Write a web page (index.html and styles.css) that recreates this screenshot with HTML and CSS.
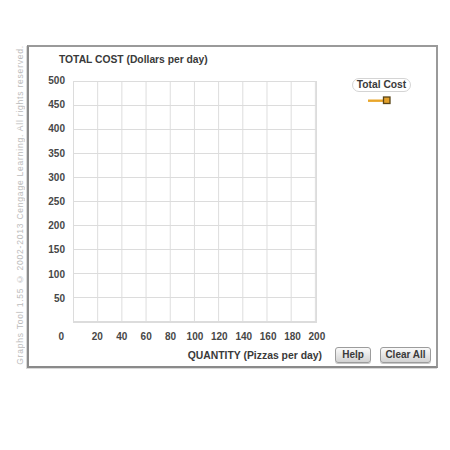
FILE: index.html
```html
<!DOCTYPE html>
<html>
<head>
<meta charset="utf-8">
<link rel="stylesheet" href="styles.css">
</head>
<body>
<div class="stage">
  <div class="copyright"><span>Graphs Tool 1.55 © 2002-2013 Cengage Learning. All rights reserved.</span></div>
  <div class="panel">
    <div class="title">TOTAL COST (Dollars per day)</div>
    <div class="chart-row">
      <div class="ylabels">
        <span>500</span><span>450</span><span>400</span><span>350</span><span>300</span>
        <span>250</span><span>200</span><span>150</span><span>100</span><span>50</span>
      </div>
      <div class="plot"></div>
      <div class="side">
        <div class="legend">Total Cost</div>
        <svg class="marker" width="24" height="9" viewBox="0 0 24 9">
          <rect x="0" y="3.5" width="16" height="2.4" fill="#e9a62a"/>
          <rect x="15.5" y="1" width="6.5" height="6.5" fill="#e3a12c" stroke="#5a4518" stroke-width="1.3"/>
        </svg>
      </div>
    </div>
    <div class="xlabels-row">
      <div class="origin">0</div>
      <div class="xlabels">
        <span>20</span><span>40</span><span>60</span><span>80</span><span>100</span>
        <span>120</span><span>140</span><span>160</span><span>180</span><span>200</span>
      </div>
    </div>
    <div class="bottom-row">
      <div class="xtitle">QUANTITY (Pizzas per day)</div>
      <div class="btn help">Help</div>
      <div class="btn clear">Clear All</div>
    </div>
  </div>
</div>
</body>
</html>
```
FILE: styles.css
```css
html, body {
  margin: 0;
  padding: 0;
  background: #ffffff;
}
body {
  font-family: "Liberation Sans", Arial, sans-serif;
  width: 450px;
  height: 450px;
}
.stage {
  display: flex;
  padding: 45px 0 0 12px;
}
.copyright {
  width: 15px;
  height: 323px;
  display: flex;
  justify-content: center;
  align-items: flex-start;
}
.copyright span {
  writing-mode: vertical-rl;
  transform: rotate(180deg);
  font-size: 8.5px;
  color: #bcbcbc;
  white-space: nowrap;
  letter-spacing: 0.79px;
}
.panel {
  width: 407px;
  height: 319px;
  border: 2px solid #8a8a8a;
  border-top-color: #9a9a9a;
  border-right-color: #9a9a9a;
  box-shadow: -1px 1px 0 #d8d8d8;
  display: flex;
  flex-direction: column;
}
.title {
  height: 34px;
  box-sizing: border-box;
  padding: 7px 0 0 30px;
  font-size: 10.3px;
  font-weight: bold;
  color: #3a3a3a;
  line-height: 12px;
}
.chart-row {
  display: flex;
  height: 242px;
}
.ylabels {
  width: 44px;
  box-sizing: border-box;
  padding-right: 8px;
  display: flex;
  flex-direction: column;
  align-items: flex-end;
  margin-top: -6px;
}
.ylabels span {
  height: 24.2px;
  line-height: 12px;
  font-size: 10px;
  font-weight: bold;
  color: #474747;
}
.plot {
  width: 244px;
  height: 242px;
  box-sizing: border-box;
  border: 1px solid #dcdcdc;
  background-image:
    linear-gradient(to right, #dcdcdc 1px, transparent 1px),
    linear-gradient(to bottom, #dcdcdc 1px, transparent 1px);
  background-size: 24.2px 24px;
  background-position: -1px -1px;
}
.side {
  flex: 1;
  display: flex;
  flex-direction: column;
  align-items: center;
  margin-top: -3px;
}
.legend {
  font-size: 10.3px;
  font-weight: bold;
  color: #3a3a3a;
  border: 1px solid #d4d4d4;
  border-radius: 7px;
  padding: 0 4px;
  line-height: 12px;
  margin-left: 10px;
}
.marker {
  margin-top: 4px;
  margin-left: 6px;
}
.xlabels-row {
  display: flex;
  height: 26px;
  align-items: center;
}
.origin {
  width: 44px;
  box-sizing: border-box;
  padding-right: 9px;
  text-align: right;
  font-size: 10px;
  font-weight: bold;
  color: #474747;
}
.xlabels {
  display: flex;
  margin-left: 12.2px;
}
.xlabels span {
  width: 24.4px;
  text-align: center;
  font-size: 10px;
  font-weight: bold;
  color: #474747;
}
.bottom-row {
  display: flex;
  align-items: center;
  height: 16px;
  margin-top: -2px;
}
.xtitle {
  width: 293px;
  box-sizing: border-box;
  text-align: right;
  font-size: 10.4px;
  font-weight: bold;
  color: #3a3a3a;
}
.btn {
  height: 16px;
  box-sizing: border-box;
  border: 1px solid #9c9c9c;
  border-radius: 3px;
  background: linear-gradient(#fafafa, #d2d2d2);
  font-size: 10px;
  font-weight: bold;
  color: #3a3a3a;
  line-height: 14px;
  text-align: center;
  box-shadow: 0 1px 0 #c8c8c8;
}
.help {
  width: 36px;
  margin-left: 13px;
}
.clear {
  width: 51px;
  margin-left: 9px;
}
```
